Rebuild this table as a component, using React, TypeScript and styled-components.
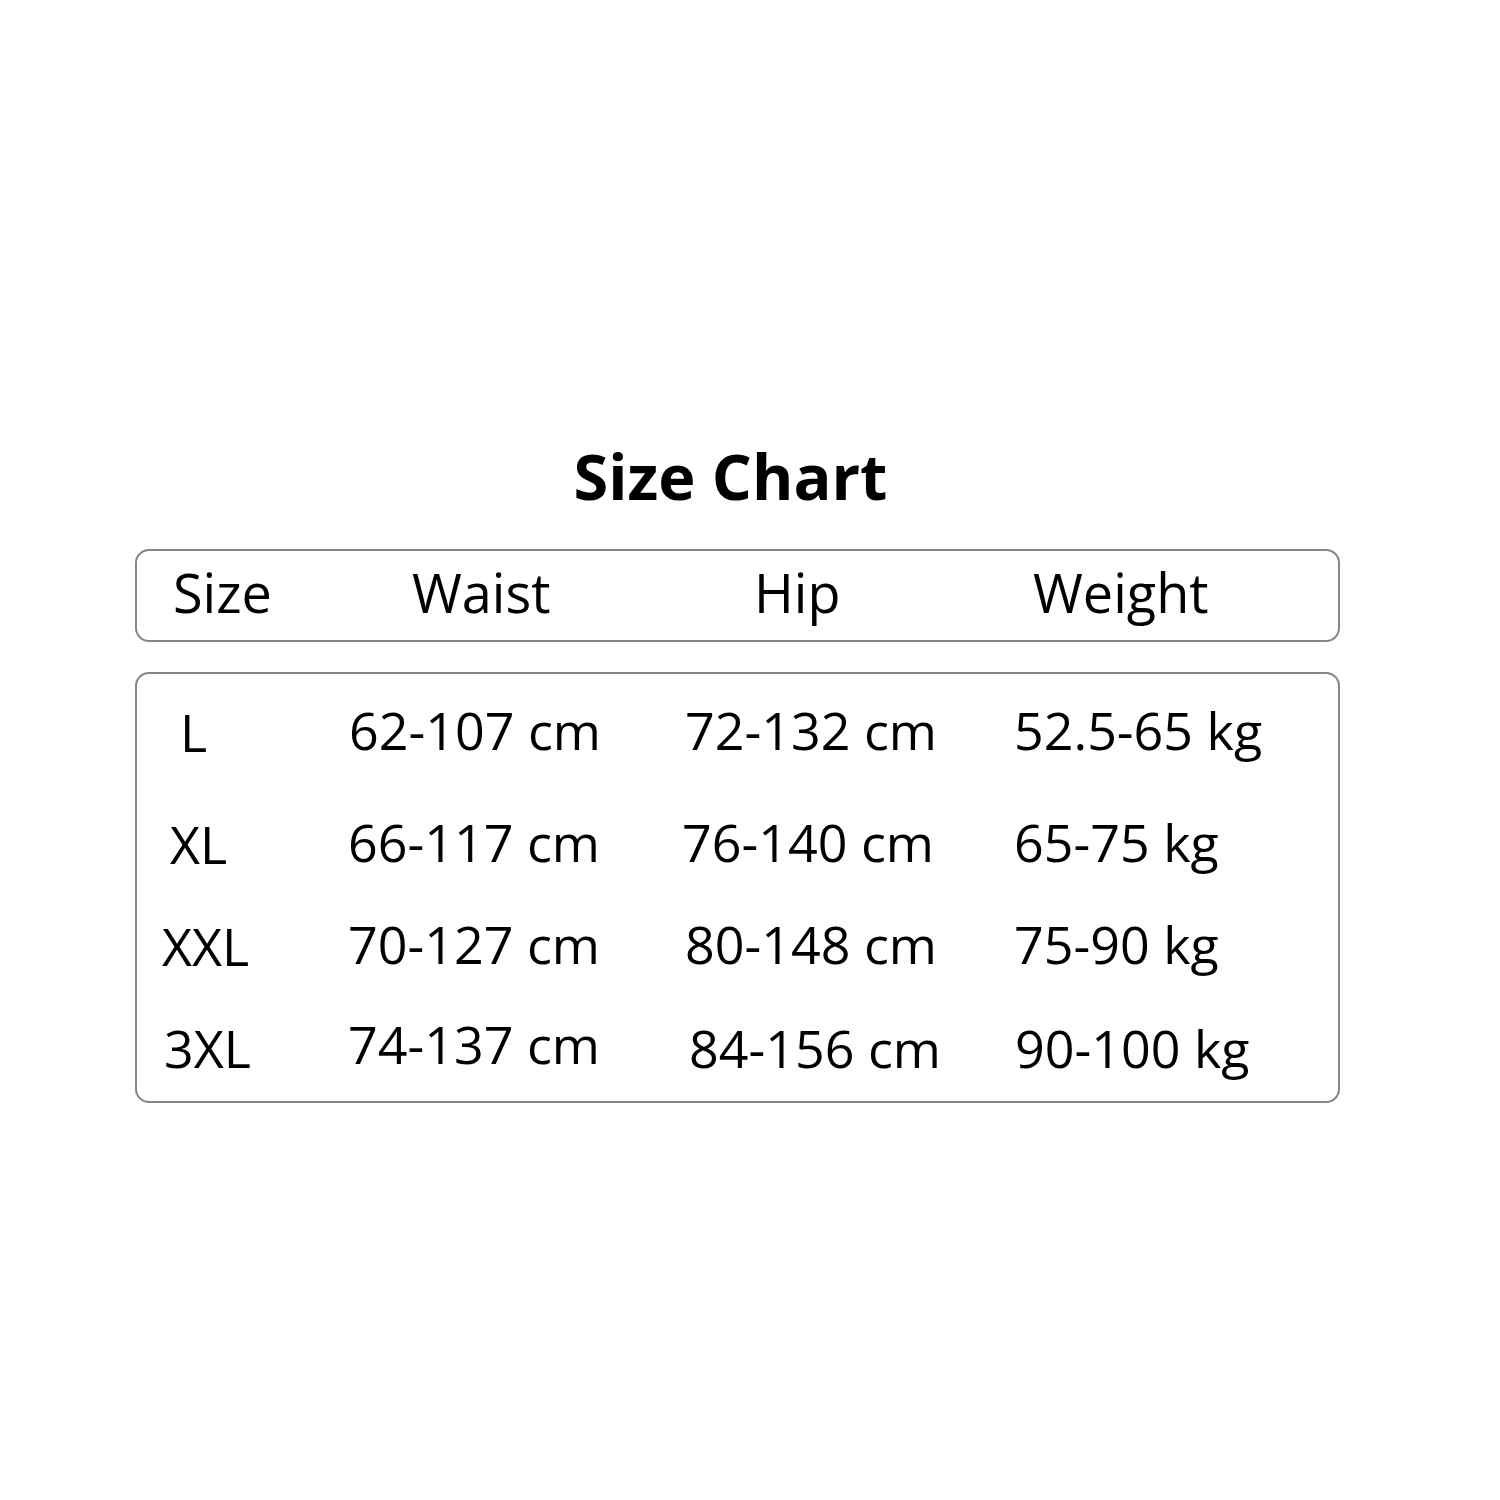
import React from "react";
import styled, { createGlobalStyle } from "styled-components";

const GlobalStyle = createGlobalStyle`
  html, body {
    margin: 0;
    padding: 0;
    background: #ffffff;
  }
  body {
    font-family: "Open Sans", "Noto Sans", sans-serif;
    color: #000000;
  }
`;

const Page = styled.div`
  width: 1500px;
  height: 1500px;
  box-sizing: border-box;
  padding: 437px 160px 0 135px;
  display: flex;
  flex-direction: column;
`;

const Title = styled.h1`
  margin: 0 0 35px;
  padding-right: 14px;
  font-size: 63px;
  line-height: 77px;
  font-weight: 700;
  text-align: center;
`;

const Box = styled.div`
  border: 2px solid #858585;
  border-radius: 14px;
  box-sizing: border-box;
`;

const HeaderBox = styled(Box)`
  height: 93px;
  padding: 0 0 6px 36px;
  margin-bottom: 30px;
  display: grid;
  grid-template-columns: 239px 342px 279px 1fr;
  font-size: 54px;
  line-height: 83px;
`;

const BodyBox = styled(Box)`
  height: 431px;
  padding: 5px 0 0 25px;
  display: flex;
  flex-direction: column;
`;

const Row = styled.div<{ $height: number }>`
  height: ${(p) => p.$height}px;
  display: grid;
  grid-template-columns: 186px 334px 332px 1fr;
  font-size: 52px;
  line-height: 102px;
`;

const Cell = styled.div<{ $dx?: number; $dy?: number }>`
  padding-left: ${(p) => p.$dx ?? 0}px;
  margin-top: ${(p) => p.$dy ?? 0}px;
  white-space: nowrap;
`;

type Entry = { text: string; dx?: number; dy?: number };

const rows: { height: number; cells: Entry[] }[] = [
  {
    height: 112,
    cells: [
      { text: "L", dx: 18, dy: 2 },
      { text: "62-107 cm", dx: 1 },
      { text: "72-132 cm", dx: 3 },
      { text: "52.5-65 kg", dx: -1 },
    ],
  },
  {
    height: 102,
    cells: [
      { text: "XL", dx: 8, dy: 2 },
      { text: "66-117 cm", dx: -1 },
      { text: "76-140 cm", dx: -1 },
      { text: "65-75 kg", dx: -1 },
    ],
  },
  {
    height: 102,
    cells: [
      { text: "XXL", dy: 2 },
      { text: "70-127 cm", dx: -1 },
      { text: "80-148 cm", dx: 3 },
      { text: "75-90 kg", dx: -1 },
    ],
  },
  {
    height: 102,
    cells: [
      { text: "3XL", dx: 2, dy: 2 },
      { text: "74-137 cm", dx: -1, dy: -2 },
      { text: "84-156 cm", dx: 7, dy: 2 },
      { text: "90-100 kg", dx: 1, dy: 2 },
    ],
  },
];

export default function App() {
  return (
    <>
      <GlobalStyle />
      <Page>
        <Title>Size Chart</Title>
        <HeaderBox>
          <Cell>Size</Cell>
          <Cell>Waist</Cell>
          <Cell>Hip</Cell>
          <Cell>Weight</Cell>
        </HeaderBox>
        <BodyBox>
          {rows.map((row, i) => (
            <Row key={i} $height={row.height}>
              {row.cells.map((c, j) => (
                <Cell key={j} $dx={c.dx} $dy={c.dy}>
                  {c.text}
                </Cell>
              ))}
            </Row>
          ))}
        </BodyBox>
      </Page>
    </>
  );
}
